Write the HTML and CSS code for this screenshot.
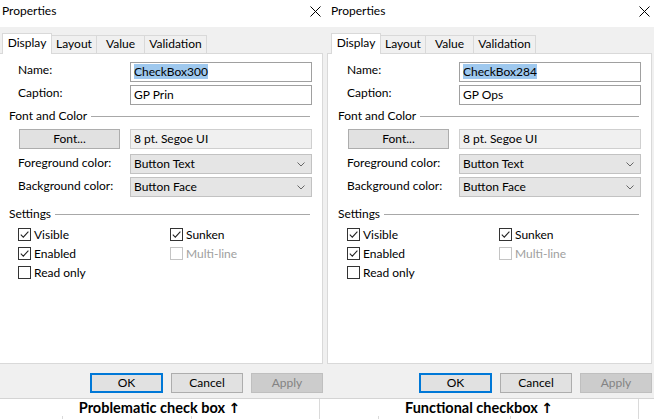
FILE: index.html
```html
<!DOCTYPE html>
<html>
<head>
<meta charset="utf-8">
<link rel="stylesheet" href="styles.css">
</head>
<body>
<div class="screen">
  <div class="dialogs">
    <section class="dlg">
      <div class="titlebar">
        <span class="title">Properties</span>
        <svg class="close" width="11" height="11" viewBox="0 0 11 11"><path d="M0.5 0.5 10.5 10.5 M10.5 0.5 0.5 10.5" stroke="#000" stroke-width="1" fill="none"/></svg>
      </div>
      <div class="body">
        <div class="tabs">
          <div class="tab sel t1">Display</div>
          <div class="tab t2">Layout</div>
          <div class="tab t3">Value</div>
          <div class="tab t4">Validation</div>
        </div>
        <div class="panel">
          <div class="frow">
            <span class="flabel">Name:</span>
            <div class="field"><span class="selected">CheckBox300</span></div>
          </div>
          <div class="frow">
            <span class="flabel">Caption:</span>
            <div class="field">GP Prin</div>
          </div>
          <div class="group"><span>Font and Color</span><span class="gline"></span></div>
          <div class="frow fontrow">
            <div class="btn fontbtn">Font...</div>
            <div class="field ro">8 pt. Segoe UI</div>
          </div>
          <div class="frow">
            <span class="flabel low">Foreground color:</span>
            <div class="field combo">Button Text<svg class="chev" width="8" height="5" viewBox="0 0 8 5"><path d="M0.5 0.5 4 4 7.5 0.5" fill="none" stroke="#666"/></svg></div>
          </div>
          <div class="frow">
            <span class="flabel low">Background color:</span>
            <div class="field combo">Button Face<svg class="chev" width="8" height="5" viewBox="0 0 8 5"><path d="M0.5 0.5 4 4 7.5 0.5" fill="none" stroke="#666"/></svg></div>
          </div>
          <div class="group settings"><span>Settings</span><span class="gline"></span></div>
          <div class="checks">
            <label class="chk"><span class="cb"><svg width="11" height="11" viewBox="0 0 11 11"><path d="M1.8 5.6 4.3 8.1 9.4 2.6" fill="none" stroke="#222" stroke-width="1.1"/></svg></span>Visible</label>
            <label class="chk"><span class="cb"><svg width="11" height="11" viewBox="0 0 11 11"><path d="M1.8 5.6 4.3 8.1 9.4 2.6" fill="none" stroke="#222" stroke-width="1.1"/></svg></span>Sunken</label>
            <label class="chk"><span class="cb"><svg width="11" height="11" viewBox="0 0 11 11"><path d="M1.8 5.6 4.3 8.1 9.4 2.6" fill="none" stroke="#222" stroke-width="1.1"/></svg></span>Enabled</label>
            <label class="chk dis"><span class="cb"></span>Multi-line</label>
            <label class="chk"><span class="cb"></span>Read only</label>
          </div>
        </div>
        <div class="buttons">
          <div class="btn ok">OK</div>
          <div class="btn">Cancel</div>
          <div class="btn disabled">Apply</div>
        </div>
      </div>
    </section>

    <section class="dlg">
      <div class="titlebar">
        <span class="title">Properties</span>
        <svg class="close" width="11" height="11" viewBox="0 0 11 11"><path d="M0.5 0.5 10.5 10.5 M10.5 0.5 0.5 10.5" stroke="#000" stroke-width="1" fill="none"/></svg>
      </div>
      <div class="body">
        <div class="tabs">
          <div class="tab sel t1">Display</div>
          <div class="tab t2">Layout</div>
          <div class="tab t3">Value</div>
          <div class="tab t4">Validation</div>
        </div>
        <div class="panel">
          <div class="frow">
            <span class="flabel">Name:</span>
            <div class="field"><span class="selected">CheckBox284</span></div>
          </div>
          <div class="frow">
            <span class="flabel">Caption:</span>
            <div class="field">GP Ops</div>
          </div>
          <div class="group"><span>Font and Color</span><span class="gline"></span></div>
          <div class="frow fontrow">
            <div class="btn fontbtn">Font...</div>
            <div class="field ro">8 pt. Segoe UI</div>
          </div>
          <div class="frow">
            <span class="flabel low">Foreground color:</span>
            <div class="field combo">Button Text<svg class="chev" width="8" height="5" viewBox="0 0 8 5"><path d="M0.5 0.5 4 4 7.5 0.5" fill="none" stroke="#666"/></svg></div>
          </div>
          <div class="frow">
            <span class="flabel low">Background color:</span>
            <div class="field combo">Button Face<svg class="chev" width="8" height="5" viewBox="0 0 8 5"><path d="M0.5 0.5 4 4 7.5 0.5" fill="none" stroke="#666"/></svg></div>
          </div>
          <div class="group settings"><span>Settings</span><span class="gline"></span></div>
          <div class="checks">
            <label class="chk"><span class="cb"><svg width="11" height="11" viewBox="0 0 11 11"><path d="M1.8 5.6 4.3 8.1 9.4 2.6" fill="none" stroke="#222" stroke-width="1.1"/></svg></span>Visible</label>
            <label class="chk"><span class="cb"><svg width="11" height="11" viewBox="0 0 11 11"><path d="M1.8 5.6 4.3 8.1 9.4 2.6" fill="none" stroke="#222" stroke-width="1.1"/></svg></span>Sunken</label>
            <label class="chk"><span class="cb"><svg width="11" height="11" viewBox="0 0 11 11"><path d="M1.8 5.6 4.3 8.1 9.4 2.6" fill="none" stroke="#222" stroke-width="1.1"/></svg></span>Enabled</label>
            <label class="chk dis"><span class="cb"></span>Multi-line</label>
            <label class="chk"><span class="cb"></span>Read only</label>
          </div>
        </div>
        <div class="buttons">
          <div class="btn ok">OK</div>
          <div class="btn">Cancel</div>
          <div class="btn disabled">Apply</div>
        </div>
      </div>
    </section>
  </div>

  <div class="sheet">
    <div class="caprow">
      <div class="cell c1">Problematic check box <span class="arrow">↑</span></div>
      <div class="cell c2">Functional checkbox <span class="arrow">↑</span></div>
      <div class="cell c3"></div>
    </div>
    <div class="gridrow">
      <div class="g g1"></div>
      <div class="g g2"></div>
      <div class="g g3"></div>
      <div class="g g4"></div>
      <div class="g g5"></div>
      <div class="g g6"></div>
      <div class="g g7"></div>
    </div>
  </div>
</div>
</body>
</html>
```

FILE: styles.css
```css
* { box-sizing: border-box; }
html, body { margin: 0; padding: 0; }
body {
  width: 654px;
  height: 419px;
  overflow: hidden;
  background: #fff;
  font-family: Lato, "Noto Sans", "DejaVu Sans", sans-serif;
  font-size: 12px;
  color: #000;
}
.screen { width: 654px; height: 419px; overflow: hidden; }

.dialogs { display: flex; margin-left: -3px; height: 398px; }
.dlg { flex: none; width: 329px; height: 398px; display: flex; flex-direction: column; }

.titlebar {
  flex: none;
  height: 27px;
  background: #fff;
  display: flex;
  justify-content: space-between;
  align-items: flex-start;
  padding: 3px 5px 0 5px;
}
.title { line-height: 16px; }
.close { margin-top: 3px; }

.body { flex: 1; background: #f0f0f0; padding-top: 6px; }

.tabs {
  display: flex;
  align-items: flex-end;
  height: 20px;
  margin-left: 5px;
  position: relative;
  z-index: 1;
}
.tab {
  height: 18px;
  border: 1px solid #d9d9d9;
  border-left: none;
  border-bottom: none;
  background: #f0f0f0;
  text-align: center;
  line-height: 16px;
}
.tab.sel {
  height: 21px;
  background: #fff;
  border-left: 1px solid #d9d9d9;
  margin-bottom: -1px;
  padding-top: 1px;
}
.t1 { width: 50px; }
.t2 { width: 45px; }
.t3 { width: 48px; }
.t4 { width: 62px; }

.panel {
  margin-left: 1px;
  width: 325px;
  height: 311px;
  background: #fff;
  border: 1px solid #d9d9d9;
  padding: 8px 0 0 10px;
  display: flex;
  flex-direction: column;
}

.frow {
  display: flex;
  align-items: flex-start;
  height: 20px;
  padding-left: 9px;
  margin-bottom: 3px;
}
.flabel { width: 112px; line-height: 13px; padding-top: 1px; }
.flabel.low { padding-top: 2px; }
.field {
  width: 182px;
  height: 20px;
  border: 1px solid #a0a0a0;
  background: #fff;
  padding-left: 3px;
  line-height: 18px;
  white-space: nowrap;
  position: relative;
}
.selected { background: #9ec8ee; }
.field.ro { background: #f0f0f0; border-color: #cfcfcf; }
.field.combo { background: #e5e5e5; border-color: #c2c2c2; }
.chev { position: absolute; right: 6px; top: 7px; }

.group {
  display: flex;
  align-items: flex-start;
  height: 13px;
  line-height: 13px;
  margin-top: 1px;
  margin-bottom: 7px;
}
.gline {
  flex: 1;
  height: 1px;
  background: #a8a8a8;
  margin: 7px 12px 0 4px;
}
.group.settings { margin-top: 7px; margin-bottom: 8px; }

.fontrow { margin-bottom: 5px; }
.btn {
  height: 20px;
  border: 1px solid #adadad;
  background: #e1e1e1;
  text-align: center;
  line-height: 18px;
}
.fontbtn { width: 101px; margin-left: 1px; margin-right: 10px; }

.checks {
  display: grid;
  grid-template-columns: 152px 140px;
  row-gap: 6px;
  padding-left: 9px;
}
.chk { display: flex; align-items: center; height: 13px; line-height: 13px; }
.cb {
  flex: none;
  width: 13px;
  height: 13px;
  border: 1px solid #333;
  background: #fff;
  margin-right: 3px;
  display: flex;
}
.chk.dis { color: #a0a0a0; }
.chk.dis .cb { border-color: #c4c4c4; }

.buttons {
  display: flex;
  justify-content: flex-end;
  padding-right: 3px;
  margin-top: 9px;
  gap: 8px;
}
.buttons .btn { width: 72px; }
.buttons .btn.ok { width: 73px; border: 2px solid #0078d7; line-height: 16px; }
.buttons .btn.disabled { background: #cccccc; border-color: #bfbfbf; color: #838383; }

.sheet { height: 21px; background: #fff; border-top: 1px solid #d4d4d4; }
.caprow { display: flex; height: 17px; }
.cell {
  height: 17px;
  font-weight: bold;
  font-size: 14.5px;
  line-height: 17px;
  text-align: center;
  border-right: 1px solid #dadada;
  white-space: nowrap;
}
.c1 { width: 320px; }
.c2 { width: 319px; }
.c3 { flex: 1; border-right: none; }
.arrow { font-family: "DejaVu Sans", sans-serif; font-weight: bold; font-size: 14px; }
.gridrow { display: flex; height: 3px; }
.g { height: 3px; border-right: 1px solid #dadada; }
.g1 { width: 63px; }
.g2 { width: 129px; }
.g3 { width: 128px; }
.g4 { width: 59px; }
.g5 { width: 132px; }
.g6 { width: 128px; }
.g7 { flex: 1; border-right: none; }
```
